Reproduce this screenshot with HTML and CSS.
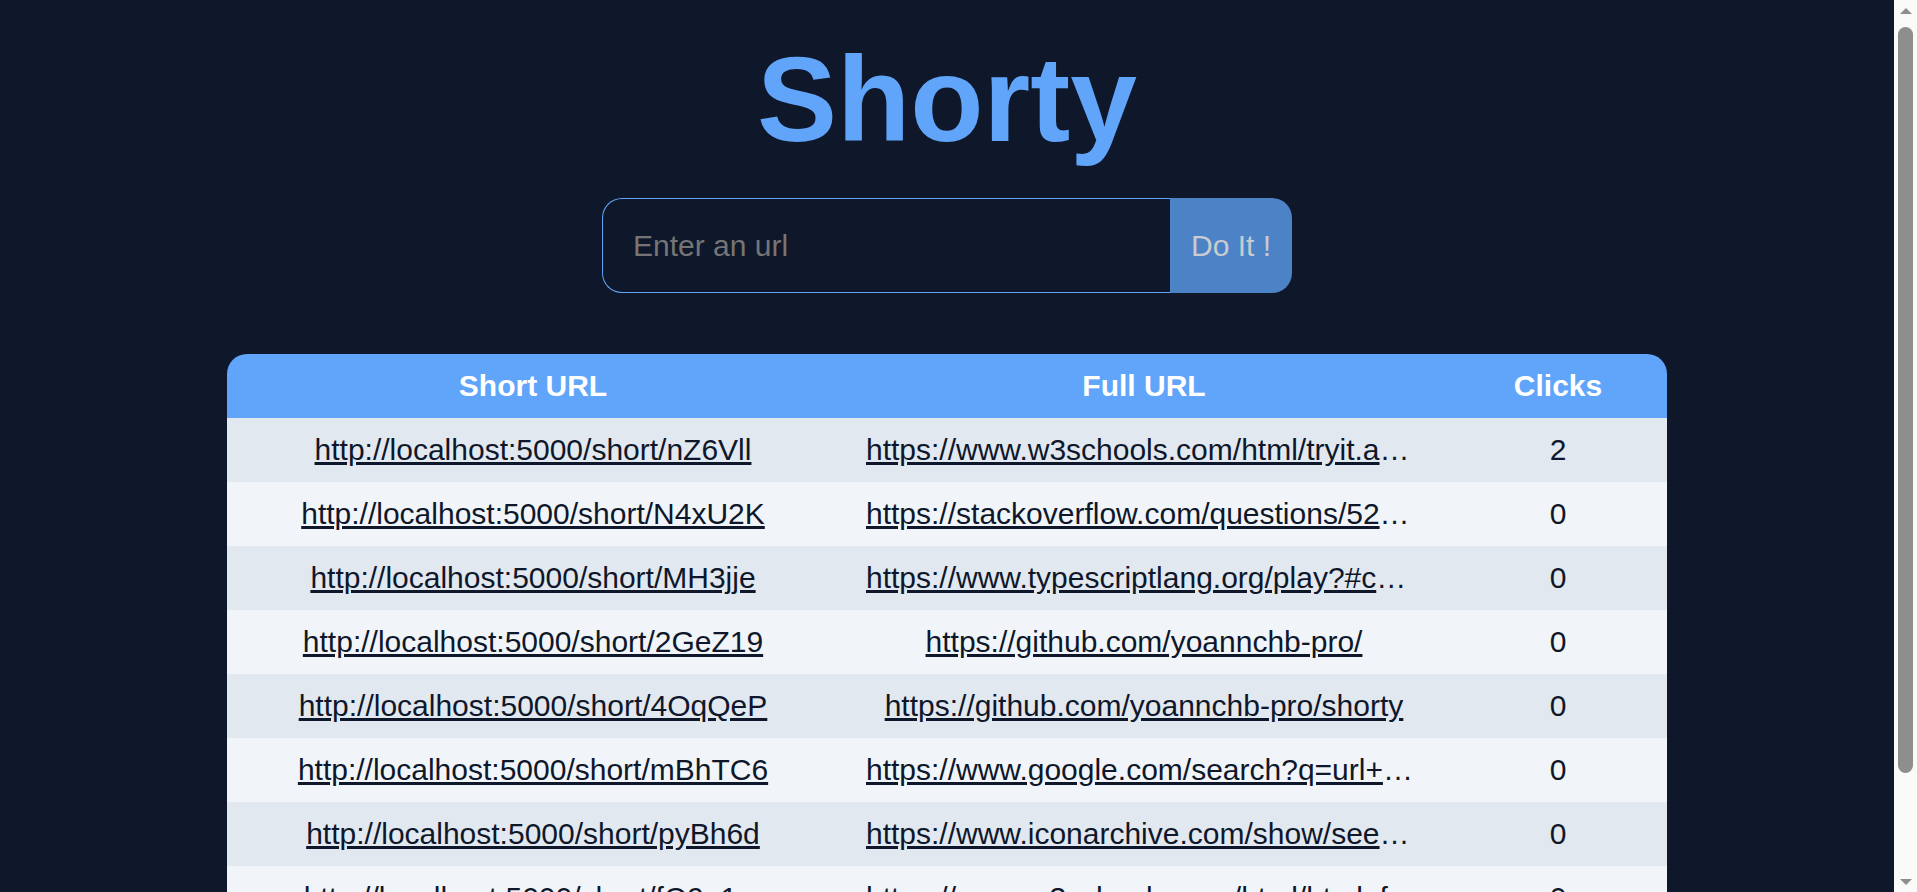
FILE: index.html
```html
<!DOCTYPE html>
<html lang="en">
<head>
<meta charset="utf-8">
<title>Shorty</title>
<link rel="stylesheet" href="styles.css">
</head>
<body>
<main class="page">
  <h1 class="title">Shorty</h1>
  <form class="shorten-form">
    <input class="url-input" type="text" placeholder="Enter an url">
    <button class="submit-btn" type="button">Do It !</button>
  </form>
  <div class="table-card">
    <table class="links-table">
      <colgroup>
        <col class="col-short">
        <col class="col-full">
        <col class="col-clicks">
      </colgroup>
      <thead>
        <tr><th>Short URL</th><th>Full URL</th><th>Clicks</th></tr>
      </thead>
      <tbody>
        <tr><td><a href="#">http://localhost:5000/short/nZ6Vll</a></td><td><div class="trunc"><a href="#">https://www.w3schools.com/html/tryit.asp?filename</a></div></td><td>2</td></tr>
        <tr><td><a href="#">http://localhost:5000/short/N4xU2K</a></td><td><div class="trunc"><a href="#">https://stackoverflow.com/questions/5297495</a></div></td><td>0</td></tr>
        <tr><td><a href="#">http://localhost:5000/short/MH3jje</a></td><td><div class="trunc"><a href="#">https://www.typescriptlang.org/play?#code/</a></div></td><td>0</td></tr>
        <tr><td><a href="#">http://localhost:5000/short/2GeZ19</a></td><td><div class="trunc"><a href="#">https://github.com/yoannchb-pro/</a></div></td><td>0</td></tr>
        <tr><td><a href="#">http://localhost:5000/short/4OqQeP</a></td><td><div class="trunc"><a href="#">https://github.com/yoannchb-pro/shorty</a></div></td><td>0</td></tr>
        <tr><td><a href="#">http://localhost:5000/short/mBhTC6</a></td><td><div class="trunc"><a href="#">https://www.google.com/search?q=url+short</a></div></td><td>0</td></tr>
        <tr><td><a href="#">http://localhost:5000/short/pyBh6d</a></td><td><div class="trunc"><a href="#">https://www.iconarchive.com/show/seed-icons</a></div></td><td>0</td></tr>
        <tr><td><a href="#">http://localhost:5000/short/fQ9a1m</a></td><td><div class="trunc"><a href="#">https://www.w3schools.com/html/html_forms</a></div></td><td>0</td></tr>
        <tr><td><a href="#">http://localhost:5000/short/Kx7pQa</a></td><td><div class="trunc"><a href="#">https://developer.mozilla.org/en-US/docs</a></div></td><td>0</td></tr>
      </tbody>
    </table>
  </div>
</main>
<aside class="scrollbar" aria-hidden="true">
  <div class="sb-btn"><span class="sb-arrow sb-up"></span></div>
  <div class="sb-track"><div class="sb-thumb"></div></div>
  <div class="sb-btn"><span class="sb-arrow sb-down"></span></div>
</aside>
</body>
</html>
```

FILE: styles.css
```css
html, body {
  margin: 0;
  padding: 0;
}

body {
  display: flex;
  align-items: flex-start;
  background: #0f172a;
  color: #0f172a;
  font-family: "Liberation Sans", Arial, Helvetica, sans-serif;
}

.page {
  flex: 1;
  min-width: 0;
  display: flex;
  flex-direction: column;
  align-items: center;
  padding: 30px 0 25px;
}

.title {
  margin: 0;
  font-size: 120px;
  line-height: 138px;
  font-weight: 700;
  color: #60a5fa;
}

.shorten-form {
  display: flex;
  margin-top: 30px;
  height: 95px;
}

.url-input {
  box-sizing: border-box;
  width: 568px;
  height: 95px;
  margin: 0;
  padding: 0 30px;
  border: 1px solid #60a5fa;
  border-right: none;
  border-radius: 20px 0 0 20px;
  background: #0f172a;
  color: #e2e8f0;
  font-family: "Liberation Sans", Arial, Helvetica, sans-serif;
  font-size: 30px;
  outline: none;
}

.url-input::placeholder {
  color: #757575;
}

.submit-btn {
  box-sizing: border-box;
  width: 122px;
  height: 95px;
  margin: 0;
  padding: 0 20px;
  border: none;
  border-radius: 0 20px 20px 0;
  background: #4c82c6;
  color: #c8cbd0;
  font-family: "Liberation Sans", Arial, Helvetica, sans-serif;
  font-size: 30px;
}

.table-card {
  margin-top: 61px;
  width: 1440px;
  border-radius: 20px;
  overflow: hidden;
}

.links-table {
  width: 100%;
  table-layout: fixed;
  border-collapse: separate;
  border-spacing: 0;
  font-size: 30px;
}

.col-short { width: 612px; }
.col-full { width: 610px; }
.col-clicks { width: 218px; }

.links-table th {
  height: 64px;
  padding: 0;
  background: #60a5fa;
  color: #ffffff;
  font-weight: 700;
  text-align: center;
  vertical-align: middle;
}

.links-table td {
  height: 64px;
  padding: 0;
  text-align: center;
  vertical-align: middle;
  white-space: nowrap;
  color: #0f172a;
}

.links-table tbody tr:nth-child(odd) td {
  background: #e2e8f0;
}

.links-table tbody tr:nth-child(even) td {
  background: #f1f5f9;
}

.links-table a {
  color: #0f172a;
  text-decoration: underline;
}

.trunc {
  max-width: 556px;
  margin: 0 auto;
  overflow: hidden;
  text-overflow: ellipsis;
  white-space: nowrap;
}

/* window scrollbar */
.scrollbar {
  position: sticky;
  top: 0;
  flex: none;
  width: 23px;
  height: 100vh;
  display: flex;
  flex-direction: column;
  background: #fafafa;
}

.sb-btn {
  flex: none;
  height: 21px;
  display: flex;
  align-items: center;
  justify-content: center;
}

.sb-arrow {
  width: 0;
  height: 0;
  border-left: 6px solid transparent;
  border-right: 6px solid transparent;
}

.sb-up {
  border-bottom: 6px solid #8e8e8e;
}

.sb-down {
  border-top: 6px solid #8e8e8e;
}

.sb-track {
  flex: 1;
  padding: 6px 4px 0;
}

.sb-thumb {
  height: 746px;
  border-radius: 8px;
  background: #8e8e8e;
}
```
